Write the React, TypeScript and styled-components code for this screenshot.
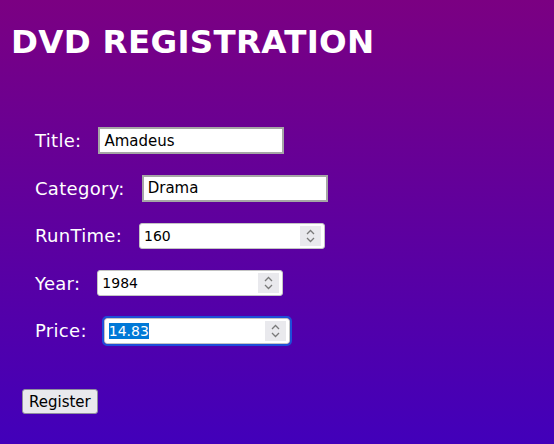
import React, { useEffect, useRef } from "react";
import styled, { createGlobalStyle } from "styled-components";

const GlobalStyle = createGlobalStyle`
    html, body {
        margin: 0;
        padding: 0;
    }
    body {
        font-family: "DejaVu Sans", "Liberation Sans", sans-serif;
    }
`
const Page = styled.div`
    min-height: 444px;
    box-sizing: border-box;
    padding: 20px 0 0 11px;
    background: linear-gradient(to bottom, #7b0082, #4200ba);
    color: white;
`
const Heading = styled.h1`
    margin: 0 0 63px 0;
    font-size: 32.5px;
    font-weight: bold;
    letter-spacing: 0.3px;
    line-height: 44px;
`
const Form = styled.form`
    display: flex;
    flex-direction: column;
    gap: 20.5px;
    padding-left: 24px;
`
const Row = styled.div`
    display: flex;
    align-items: center;
    gap: 17px;
    height: 27px;
`
const Label = styled.label`
    font-size: 18px;
    letter-spacing: 0.3px;
    line-height: 27px;
`
const TextInput = styled.input`
    box-sizing: border-box;
    width: 186px;
    height: 27px;
    padding: 0 4px;
    border: 2px solid #a6a6a6;
    font-family: "DejaVu Sans", sans-serif;
    font-size: 15px;
    color: #000;
    background: white;
    outline: none;
`
const NumberField = styled.div`
    position: relative;
    width: 186px;
    height: 26px;
`
const NumberInput = styled.input<{ $focused?: boolean }>`
    box-sizing: border-box;
    width: 100%;
    height: 100%;
    padding: 0 4px;
    border: 1px solid #c4c4c4;
    border-radius: 3px;
    font-family: "DejaVu Sans", sans-serif;
    font-size: 14px;
    color: #000;
    background: white;
    outline: ${(p) => (p.$focused ? "2px solid #1e4fd8" : "none")};
    outline-offset: 0;
    appearance: textfield;
    -moz-appearance: textfield;
    &::-webkit-inner-spin-button,
    &::-webkit-outer-spin-button {
        -webkit-appearance: none;
        margin: 0;
    }
    &::selection {
        background: #0078d7;
        color: white;
    }
`
const Spinner = styled.span`
    position: absolute;
    top: 3px;
    right: 4px;
    width: 21px;
    height: 20px;
    background: #e9e9ed;
    display: flex;
    align-items: center;
    justify-content: center;
    pointer-events: none;
`
const ButtonRow = styled.div`
    padding: 45px 0 0 11px;
`
const Button = styled.button`
    font-family: "DejaVu Sans", sans-serif;
    font-size: 15px;
    color: #000;
    background: #e9e9ed;
    border: 1px solid #8f8f9d;
    border-radius: 3px;
    padding: 1px 6px;
    height: 25px;
`

const Chevrons: React.FC = () => (
  <svg width="11" height="16" viewBox="0 0 11 16" fill="none" stroke="#7a7a7a" strokeWidth="1.3">
    <path d="M2 6 L5.5 2.5 L9 6" />
    <path d="M2 10 L5.5 13.5 L9 10" />
  </svg>
);

const NumberBox: React.FC<{ value: string; focused?: boolean }> = ({ value, focused }) => {
  const ref = useRef<HTMLInputElement>(null);
  useEffect(() => {
    if (focused && ref.current) {
      ref.current.focus();
      ref.current.select();
    }
  }, [focused]);
  return (
    <NumberField>
      <NumberInput ref={ref} type="text" defaultValue={value} $focused={focused} />
      <Spinner>
        <Chevrons />
      </Spinner>
    </NumberField>
  );
};

const App: React.FC = () => {
  return (
    <Page>
      <GlobalStyle />
      <Heading>DVD REGISTRATION</Heading>
      <Form onSubmit={(e) => e.preventDefault()}>
        <Row>
          <Label>Title:</Label>
          <TextInput type="text" defaultValue="Amadeus" />
        </Row>
        <Row>
          <Label>Category:</Label>
          <TextInput type="text" defaultValue="Drama" />
        </Row>
        <Row>
          <Label>RunTime:</Label>
          <NumberBox value="160" />
        </Row>
        <Row>
          <Label>Year:</Label>
          <NumberBox value="1984" />
        </Row>
        <Row>
          <Label>Price:</Label>
          <NumberBox value="14.83" focused />
        </Row>
      </Form>
      <ButtonRow>
        <Button type="button">Register</Button>
      </ButtonRow>
    </Page>
  );
};

export default App;
